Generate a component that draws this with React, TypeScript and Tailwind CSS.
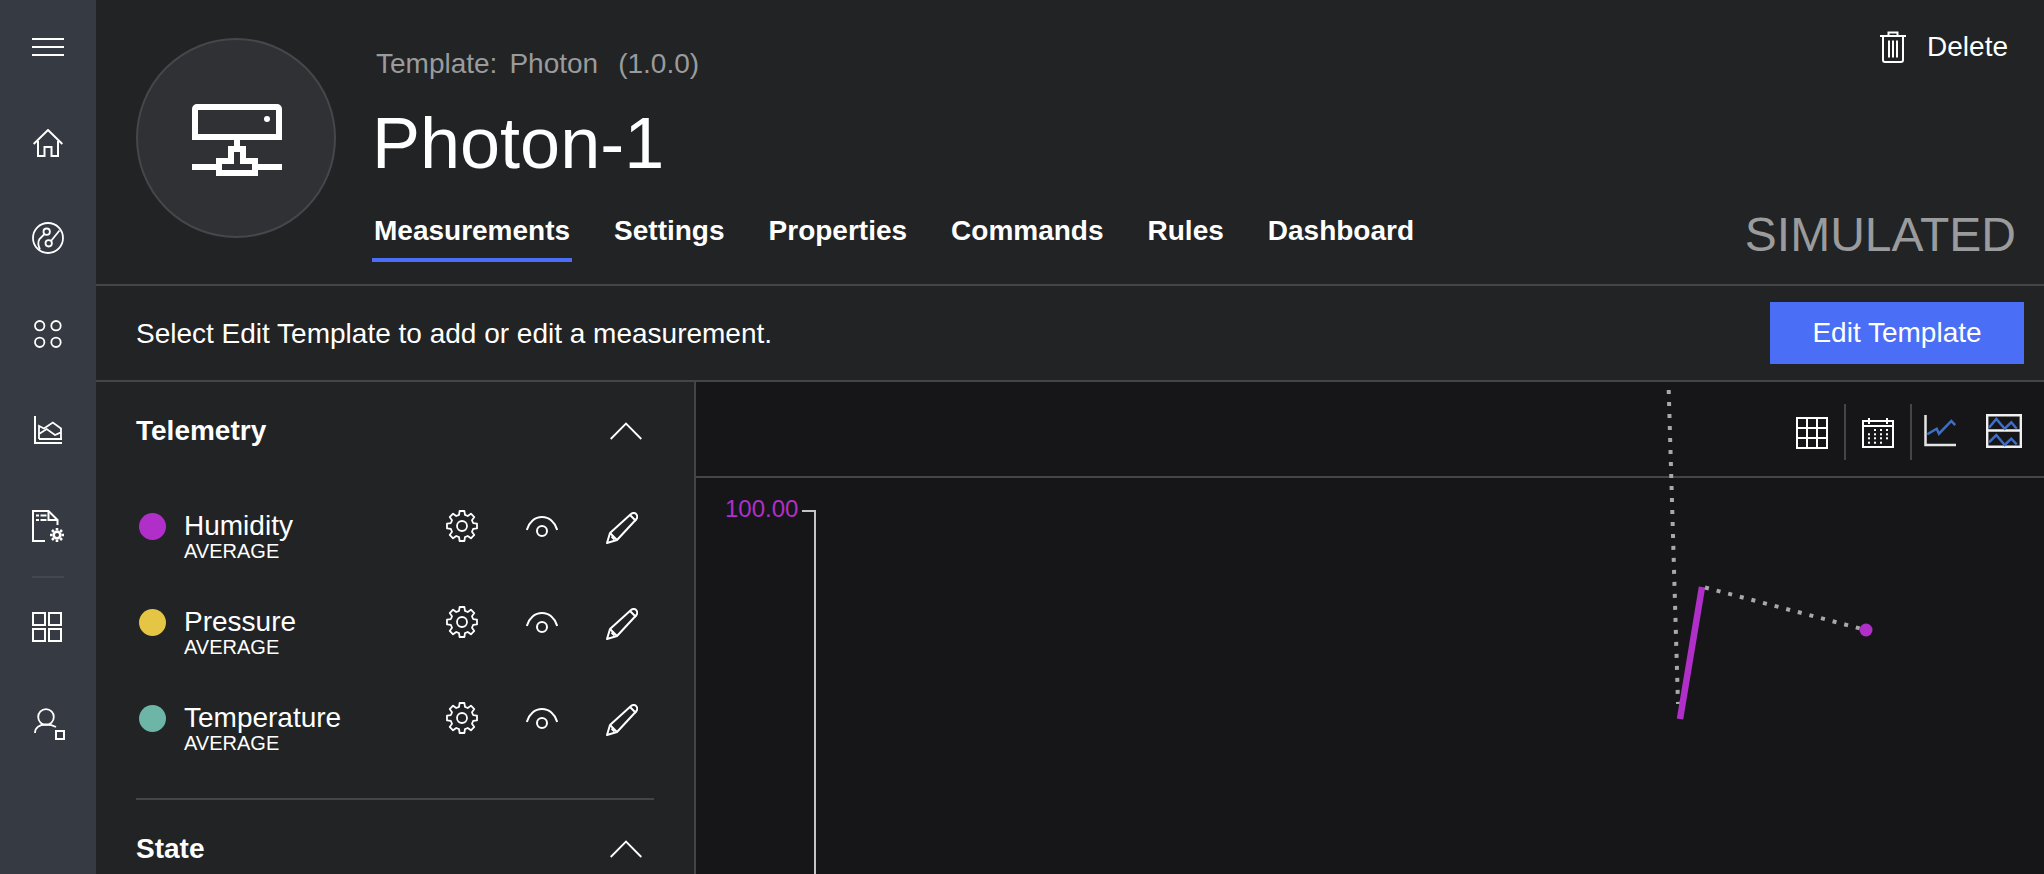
import React from "react";

const S = "#ffffff";

function Hamburger() {
  return (
    <svg width="32" height="20" viewBox="0 0 32 20" fill="none" stroke={S} strokeWidth="2">
      <path d="M0 2h32M0 10h32M0 18h32" />
    </svg>
  );
}
function Home() {
  return (
    <svg width="30" height="28" viewBox="0 0 30 28" fill="none" stroke={S} strokeWidth="2">
      <path d="M.7 15 15 1l14.300 14M5 12v15h6.500v-9h7v9H25V12" />
    </svg>
  );
}
function Gauge() {
  return (
    <svg width="32" height="32" viewBox="0 0 32 32" fill="none" stroke={S} strokeWidth="1.800">
      <circle cx="16" cy="16" r="15" />
      <circle cx="14.700" cy="9.700" r="3.200" />
      <circle cx="16.700" cy="21.300" r="3.200" />
      <path d="M19 19 27.500 8.500M12.500 12 7.500 17c-1.800 3-1.200 7 .500 10.500" />
    </svg>
  );
}
function Apps() {
  return (
    <svg width="28" height="28" viewBox="0 0 28 28" fill="none" stroke={S} strokeWidth="1.800">
      <circle cx="5.700" cy="5.700" r="4.700" />
      <circle cx="22" cy="5.700" r="4.700" />
      <circle cx="5.700" cy="22.300" r="4.700" />
      <circle cx="22" cy="22.300" r="4.700" />
    </svg>
  );
}
function AreaIcon() {
  return (
    <svg width="28" height="28" viewBox="0 0 28 28" fill="none" stroke={S} strokeWidth="2">
      <path d="M1 0v27h27M5 23h23" />
      <path d="M5 23V10l5 2.500 8.800-6L27 12.500V23" strokeWidth="1.800" />
      <path d="M5 18l7.700-5 8.300 6 6-2.600" strokeWidth="1.800" />
    </svg>
  );
}
function DocGear() {
  return (
    <svg width="32" height="32" viewBox="0 0 32 32" fill="none" stroke={S} strokeWidth="2">
      <path d="M13 31H1V1h15.500l9 9v5" />
      <path d="M16.500 1v9h9" />
      <path d="M4 5.500h3M8.500 5.500h6M4 10h3M8.500 10h6" />
      <circle cx="25" cy="25" r="3.300" strokeWidth="2.600" />
      <path d="M25 18v2.500M25 29.500V32M18 25h2.500M29.500 25H32M20 20l1.800 1.800M28.200 28.200 30 30M30 20l-1.800 1.800M21.800 28.200 20 30" strokeWidth="2.600" />
    </svg>
  );
}
function Tiles() {
  return (
    <svg width="30" height="30" viewBox="0 0 30 30" fill="none" stroke={S} strokeWidth="2">
      <rect x="1" y="1" width="12" height="12" />
      <rect x="17" y="1" width="12" height="12" />
      <rect x="1" y="17" width="12" height="12" />
      <rect x="17" y="17" width="12" height="12" />
    </svg>
  );
}
function UserSquare() {
  return (
    <svg width="31" height="32" viewBox="0 0 31 32" fill="none" stroke={S} strokeWidth="1.800">
      <circle cx="12" cy="9" r="7.800" />
      <path d="M1 25c0-5.500 4.500-8.500 11-8.500 4 0 7.500 1 10 2.500" />
      <rect x="22" y="23" width="8" height="8" strokeWidth="2" />
    </svg>
  );
}
function Device() {
  return (
    <svg width="90" height="72" viewBox="0 0 90 72" fill="none" stroke={S} strokeWidth="6">
      <path d="M3 33V5a2 2 0 0 1 2-2h80a2 2 0 0 1 2 2v28z" />
      <circle cx="75" cy="15" r="3" fill={S} stroke="none" />
      <path d="M45 36v6" />
      <path d="M39 45h12v12h12v12H27V57h12z" />
      <path d="M0 63h27M63 63h27" />
    </svg>
  );
}
function Trash() {
  return (
    <svg width="26" height="32" viewBox="0 0 26 32" fill="none" stroke={S} strokeWidth="2">
      <path d="M0 5h26M8.500 5V1.500h9V5M3 5v24a2 2 0 0 0 2 2h16a2 2 0 0 0 2-2V5" />
      <path d="M9 9.500v17M13 9.500v17M17 9.500v17" />
    </svg>
  );
}
function Chevron() {
  return (
    <svg width="32" height="18" viewBox="0 0 32 18" fill="none" stroke={S} strokeWidth="1.800">
      <path d="M.7 17 16 1.500 31.300 17" />
    </svg>
  );
}
function Gear() {
  const teeth = [0, 45, 90, 135, 180, 225, 270, 315];
  const d =
    teeth
      .map((a) => {
        const r = (x: number) => ((a + x - 90) * Math.PI) / 180;
        const p = (rad: number, x: number) =>
          `${(16 + rad * Math.cos(r(x))).toFixed(2)} ${(16 + rad * Math.sin(r(x))).toFixed(2)}`;
        return `${a === 0 ? "M" : "L"}${p(11.500, -15)} L${p(15.200, -9)} L${p(15.200, 9)} L${p(11.500, 15)}`;
      })
      .join(" ") + " Z";
  return (
    <svg width="32" height="32" viewBox="0 0 32 32" fill="none" stroke={S} strokeWidth="1.800" strokeLinejoin="round">
      <path d={d} />
      <circle cx="16" cy="16" r="5" />
    </svg>
  );
}
function Eye() {
  return (
    <svg width="32" height="22" viewBox="0 0 32 22" fill="none" stroke={S} strokeWidth="2">
      <path d="M.8 14C3 6 9 1 16 1s13 5 15.200 13" />
      <circle cx="16" cy="15" r="5" />
    </svg>
  );
}
function Pencil() {
  return (
    <svg width="32" height="32" viewBox="0 0 32 32" fill="none" stroke={S} strokeWidth="2" strokeLinejoin="round">
      <path d="M1 31 4 21 25 2c2-1.700 4.500-1 5.500.5s1 3.500-.5 5L11 28z" />
      <path d="M4 21l7 7M24 3l6 6M5.500 24.500l3 3" />
    </svg>
  );
}
function Grid() {
  return (
    <svg width="32" height="32" viewBox="0 0 32 32" fill="none" stroke={S} strokeWidth="2">
      <path d="M1 1h30v30H1zM11 1v30M21 1v30M1 11h30M1 21h30" />
    </svg>
  );
}
function Calendar() {
  const dots: [number, number][] = [];
  [11, 15.300, 19.300, 23.700].forEach((y, i) => {
    [6, 12, 18, 24].forEach((x, j) => {
      if ((i === 0 && j === 0) || (i === 3 && j === 3)) return;
      dots.push([x, y]);
    });
  });
  return (
    <svg width="32" height="30" viewBox="0 0 32 30" fill="none" stroke={S} strokeWidth="2">
      <path d="M1 3h30v26H1zM1 8h30M7 0v6M25 0v6" />
      {dots.map(([x, y]) => (
        <rect key={`${x}-${y}`} x={x} y={y} width="2" height="2" fill={S} stroke="none" />
      ))}
    </svg>
  );
}
function LineIcon() {
  return (
    <svg width="32" height="32" viewBox="0 0 32 32" fill="none">
      <path d="M1.500 0v30H32" stroke="#e4e4e4" strokeWidth="2.500" />
      <path d="M3.300 19.300 12.700 13.700 15 18.700 27.300 6 31.300 10" stroke="#3f6fc4" strokeWidth="2.500" />
    </svg>
  );
}
function AreaSplit() {
  return (
    <svg width="36" height="34" viewBox="0 0 36 34" fill="none">
      <path d="M1.200 1.200h33.600v31.600H1.200zM1.200 16.500h33.600" stroke="#f0f0f0" strokeWidth="2.400" />
      <path d="M3 13.700 10.300 5l8.400 9.700 6.600-6.400 5.400 6.400" stroke="#3f6fc4" strokeWidth="2.500" />
      <path d="M3 28.300 10.300 21l8.400 10 6.600-6.300 5.400 5.600" stroke="#3f6fc4" strokeWidth="2.500" />
    </svg>
  );
}

function NavSlot({ children, className }: { children: React.ReactNode; className: string }) {
  return <div className={`flex w-full items-center justify-center ${className}`}>{children}</div>;
}

function Measure({ name, color }: { name: string; color: string }) {
  return (
    <div className="flex h-[96px] items-start">
      <div className="mt-[3px] ml-[3px] h-[27px] w-[27px] rounded-full" style={{ backgroundColor: color }} />
      <div className="ml-[18px] w-[262px]">
        <div className="text-[28px] leading-[32px] text-white">{name}</div>
        <div className="mt-[-3px] text-[20px] leading-[24px] text-white">AVERAGE</div>
      </div>
      <div>
        <Gear />
      </div>
      <div className="mt-[6px] ml-[48px]">
        <Eye />
      </div>
      <div className="mt-[2px] ml-[48px]">
        <Pencil />
      </div>
    </div>
  );
}

export default function App() {
  return (
    <div
      className="flex h-[874px] w-[2044px] overflow-hidden bg-[#212325] text-white"
      style={{ fontFamily: '"Liberation Sans", Arial, sans-serif' }}
    >
      <nav className="flex h-full w-[96px] shrink-0 flex-col items-center bg-[#363a42]">
        <NavSlot className="mt-[37px] h-[20px]"><Hamburger /></NavSlot>
        <NavSlot className="mt-[72px] h-[28px]"><Home /></NavSlot>
        <NavSlot className="mt-[65px] h-[32px]"><Gauge /></NavSlot>
        <NavSlot className="mt-[66px] h-[28px]"><Apps /></NavSlot>
        <NavSlot className="mt-[68px] h-[28px]"><AreaIcon /></NavSlot>
        <NavSlot className="mt-[66px] h-[32px]"><DocGear /></NavSlot>
        <div className="mt-[34px] h-[2px] w-[32px] bg-[#44474e]" />
        <NavSlot className="mt-[34px] h-[30px]"><div className="mr-[2px]"><Tiles /></div></NavSlot>
        <NavSlot className="mt-[66px] h-[32px]"><div className="ml-[2px]"><UserSquare /></div></NavSlot>
      </nav>
      <main className="relative flex min-w-0 flex-1 flex-col">
        <header className="flex h-[286px] shrink-0 border-b-2 border-[#444548]">
          <div className="mt-[38px] ml-[40px] flex h-[200px] w-[200px] shrink-0 items-center justify-center rounded-full border-2 border-[#45474a] bg-[#303135]">
            <div className="mt-[4px] ml-[2px]"><Device /></div>
          </div>
          <div className="ml-[36px] flex min-w-0 flex-1 flex-col">
            <div className="mt-[48px] flex h-[32px] items-center pl-[4px] text-[28px] text-[#9a9b9c]">
              <span>Template:</span>
              <span className="ml-[12px]">Photon</span>
              <span className="ml-[20px]">(1.0.0)</span>
            </div>
            <h1 className="mt-[27px] h-[72px] text-[72px] leading-[72px] font-normal">Photon-1</h1>
            <div className="mt-[34px] flex text-[28px] font-bold">
              <div className="h-[49px] border-b-4 border-[#4a6ef5] px-[2px] leading-[36px]">Measurements</div>
              <div className="ml-[42px] leading-[36px]">Settings</div>
              <div className="ml-[44px] leading-[36px]">Properties</div>
              <div className="ml-[44px] leading-[36px]">Commands</div>
              <div className="ml-[44px] leading-[36px]">Rules</div>
              <div className="ml-[44px] leading-[36px]">Dashboard</div>
            </div>
          </div>
          <div className="flex w-[360px] shrink-0 flex-col items-end pr-[28px]">
            <div className="mt-[30px] flex h-[34px] items-center">
              <Trash />
              <span className="mr-[8px] ml-[21px] text-[28px]">Delete</span>
            </div>
            <div className="mt-[143px] text-[48px] leading-[56px] text-[#9a9b9c]">SIMULATED</div>
          </div>
        </header>
        <div className="flex h-[96px] shrink-0 items-center justify-between border-b-2 border-[#444548] pr-[20px] pl-[40px]">
          <span className="mt-[2px] text-[28px]">Select Edit Template to add or edit a measurement.</span>
          <button className="h-[62px] w-[254px] bg-[#4a6ef5] text-[28px] text-white">Edit Template</button>
        </div>
        <div className="flex min-h-0 flex-1">
          <aside className="w-[600px] shrink-0 border-r-2 border-[#444548] pr-[40px] pl-[40px]">
            <div className="flex h-[98px] items-center justify-between pr-[12px]">
              <span className="text-[28px] font-bold">Telemetry</span>
              <Chevron />
            </div>
            <div className="mt-[30px]">
              <Measure name="Humidity" color="#b12fc9" />
              <Measure name="Pressure" color="#e4c544" />
              <Measure name="Temperature" color="#6db5a6" />
            </div>
            <div className="h-[2px] bg-[#444548]" />
            <div className="flex h-[98px] items-center justify-between pr-[12px]">
              <span className="text-[28px] font-bold">State</span>
              <Chevron />
            </div>
          </aside>
          <section className="flex min-w-0 flex-1 flex-col bg-[#161618]">
            <div className="flex h-[96px] shrink-0 items-center justify-end border-b-2 border-[#444548] pt-[6px] pr-[22px]">
              <div className="mt-[2px]"><Grid /></div>
              <div className="mx-[16px] h-[56px] w-[2px] bg-[#444548]" />
              <div className="mt-[2px]"><Calendar /></div>
              <div className="mr-[12px] ml-[16px] h-[56px] w-[2px] bg-[#444548]" />
              <div className="mt-[-2px]"><LineIcon /></div>
              <div className="ml-[30px] mt-[-2px]"><AreaSplit /></div>
            </div>
            <div className="flex pt-[32px] pl-[29px]">
              <span className="mt-[-15px] text-[24px] leading-[28px] text-[#b12fc9]">100.00</span>
              <div className="ml-[4px] h-[400px] w-[14px] border-t-2 border-r-2 border-[#c4c4c4]" />
            </div>
          </section>
        </div>
        <svg
          className="pointer-events-none absolute top-0 left-0"
          width="1948"
          height="874"
          viewBox="96 0 1948 874"
          fill="none"
        >
          <path d="M1668.700 390 1678 704" stroke="#a9a9a9" strokeWidth="4" strokeDasharray="4 8" />
          <path d="M1702 587 1680 719" stroke="#b12fc9" strokeWidth="6.500" />
          <path d="M1705 587.500 1862 629" stroke="#a9a9a9" strokeWidth="4" strokeDasharray="4 8" />
          <circle cx="1866" cy="630" r="6.500" fill="#b12fc9" />
        </svg>
      </main>
    </div>
  );
}
